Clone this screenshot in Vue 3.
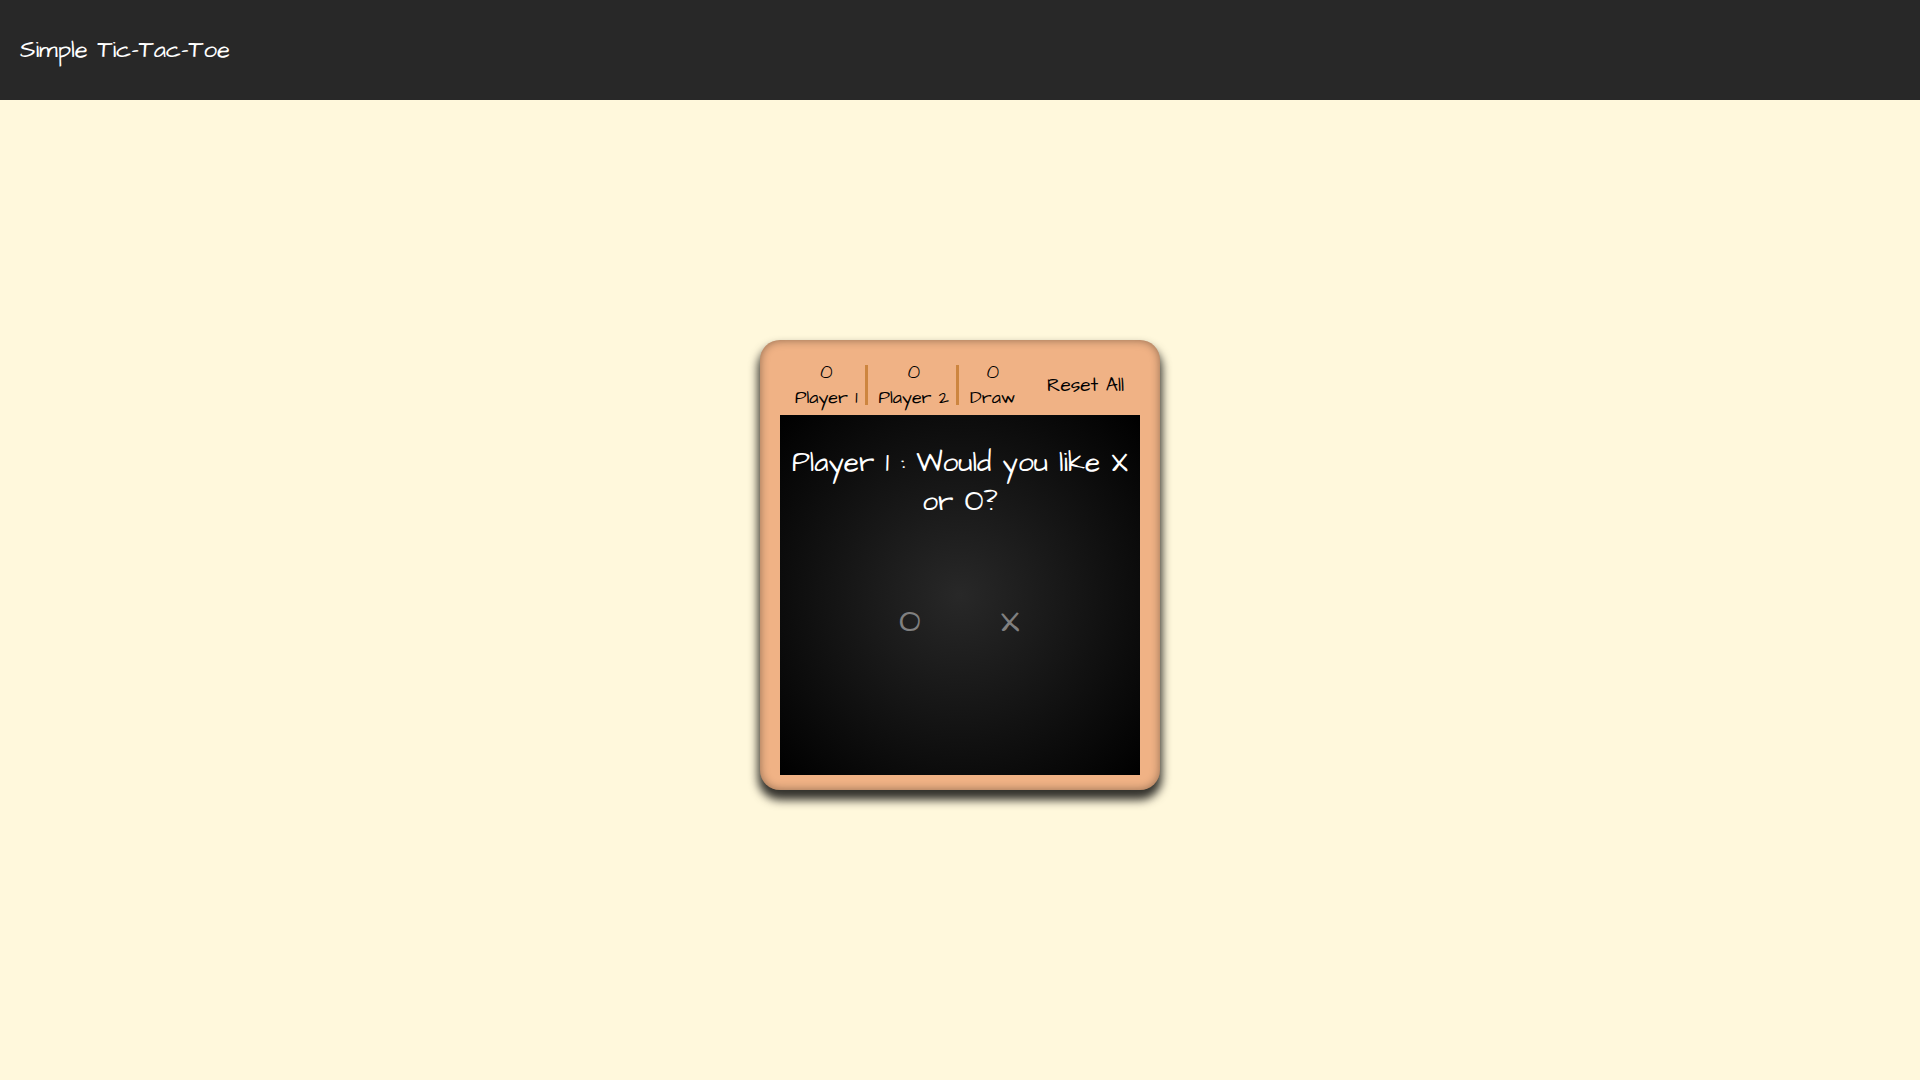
<script setup>
import { ref } from 'vue'

const scores = ref([
  { label: 'Player 1', value: 0 },
  { label: 'Player 2', value: 0 },
  { label: 'Draw', value: 0 },
])
const marks = ['O', 'X']
const player = ref(1)

function resetAll() {
  scores.value.forEach((score) => { score.value = 0 })
  player.value = 1
}
</script>

<template>
  <div class="page">
    <header class="topbar">
      <h1 class="title">Simple Tic-Tac-Toe</h1>
    </header>
    <main class="stage">
      <section class="game">
        <div class="scorebar">
          <ul class="scores">
            <li v-for="score in scores" :key="score.label" class="score">
              <span class="value">{{ score.value }}</span>
              <span class="label">{{ score.label }}</span>
            </li>
          </ul>
          <button type="button" class="reset" @click="resetAll">Reset All</button>
        </div>
        <div class="board">
          <p class="question">Player {{ player }} : Would you like X or O?</p>
          <div class="choices">
            <button v-for="mark in marks" :key="mark" type="button" class="choice">{{ mark }}</button>
          </div>
        </div>
      </section>
    </main>
  </div>
</template>

<style>
body {
  margin: 0;
  background: #fff8dc;
}
</style>

<style scoped>
.page {
  display: flex;
  flex-direction: column;
  min-height: 100vh;
  font-family: "Architects Daughter", Lato, sans-serif;
  font-size: 18px;
  color: #000;
}
.topbar {
  display: flex;
  align-items: center;
  height: 100px;
  padding: 0 20px;
  background: #282828;
}
.title {
  margin: 0;
  font-size: 24px;
  font-weight: 400;
  color: #fff;
}
.stage {
  flex: 1;
  display: flex;
  justify-content: center;
  align-items: center;
  padding-bottom: 50px;
}
.game {
  box-sizing: border-box;
  width: 400px;
  padding: 20px 20px 15px;
  border-radius: 20px;
  background: #f0b285;
  box-shadow: 0 8px 10px 2px rgba(0, 0, 0, 0.8), inset 0 0 10px rgba(0, 0, 0, 0.4);
}
.scorebar {
  display: flex;
  justify-content: space-between;
  align-items: center;
  height: 50px;
  padding: 0 16px 0 4px;
  margin-bottom: 5px;
}
.scores {
  display: flex;
  margin: 0;
  padding: 0;
  list-style: none;
}
.score {
  display: flex;
  flex-direction: column;
  align-items: center;
  height: 40px;
  padding: 0 7px 0 11px;
  line-height: 25px;
}
.score + .score {
  border-left: 3px solid #cd853f;
}
.value {
  margin-top: -5px;
  font-size: 20px;
}
.reset {
  padding: 0;
  border: 0;
  background: none;
  font: inherit;
  font-size: 19px;
  color: inherit;
  cursor: pointer;
}
.board {
  display: flex;
  flex-direction: column;
  height: 360px;
  background: radial-gradient(#282828, #000);
  text-align: center;
}
.question {
  margin: 28px 0 0;
  font-size: 28px;
  line-height: 39px;
  color: #fff;
}
.choices {
  display: flex;
  justify-content: center;
  margin-top: 50px;
}
.choice {
  width: 100px;
  height: 100px;
  padding: 0;
  border: 0;
  background: none;
  font: inherit;
  font-size: 32px;
  color: #808080;
  cursor: pointer;
}
.choice:hover {
  color: #fff;
}
</style>
